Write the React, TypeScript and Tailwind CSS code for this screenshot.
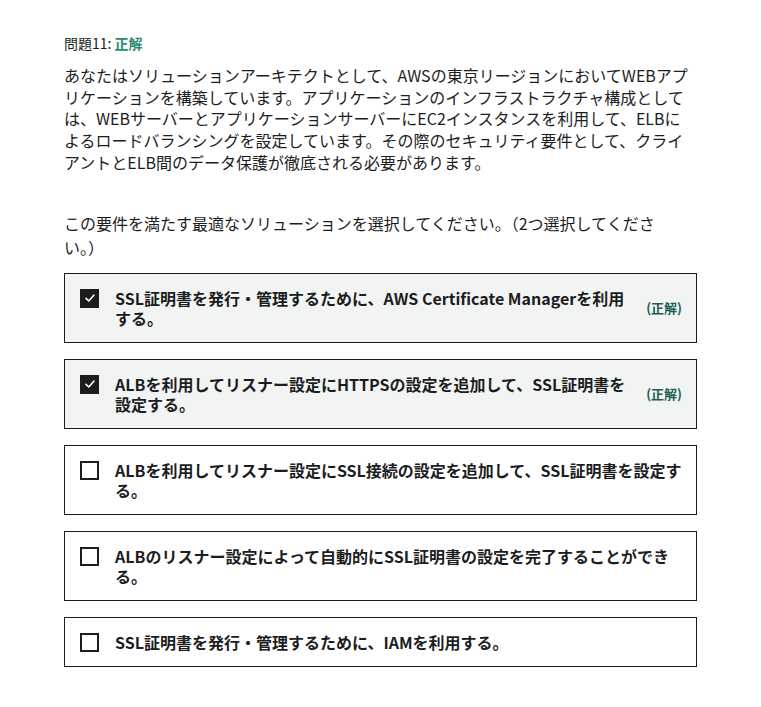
const font = { fontFamily: '"Noto Sans CJK JP", "Noto Sans", sans-serif' };

type Choice = { text: string; checked: boolean; correct: boolean };

const choices: Choice[] = [
  { text: 'SSL証明書を発行・管理するために、AWS Certificate Managerを利用する。', checked: true, correct: true },
  { text: 'ALBを利用してリスナー設定にHTTPSの設定を追加して、SSL証明書を設定する。', checked: true, correct: true },
  { text: 'ALBを利用してリスナー設定にSSL接続の設定を追加して、SSL証明書を設定する。', checked: false, correct: false },
  { text: 'ALBのリスナー設定によって自動的にSSL証明書の設定を完了することができる。', checked: false, correct: false },
  { text: 'SSL証明書を発行・管理するために、IAMを利用する。', checked: false, correct: false },
];

function Checkbox({ checked }: { checked: boolean }) {
  if (checked) {
    return (
      <div className="w-[19px] h-[19px] shrink-0 bg-[#1c1d1f] flex items-center justify-center">
        <svg width="12" height="12" viewBox="0 0 12 12" fill="none">
          <path d="M2 6.3 L4.8 9 L10 3" stroke="white" strokeWidth="1.6" strokeLinecap="round" strokeLinejoin="round" />
        </svg>
      </div>
    );
  }
  return <div className="w-[19px] h-[19px] shrink-0 border-2 border-[#1c1d1f] bg-white" />;
}

export default function App() {
  return (
    <div className="w-[761px] h-[707px] bg-white text-[#1c1d1f]" style={font}>
      <div className="pl-[64px] pt-[33px] w-[697px]">
        {/* Header */}
        <div className="text-[14px] leading-[20px] mb-[12px]">
          問題11: <span className="font-bold text-[#2d8a73]">正解</span>
        </div>

        <p className="text-[16px] leading-[21.7px]">
          あなたはソリューションアーキテクトとして、AWSの東京リージョンにおいてWEBアプ<br />
          リケーションを構築しています。アプリケーションのインフラストラクチャ構成として<br />
          は、WEBサーバーとアプリケーションサーバーにEC2インスタンスを利用して、ELBに<br />
          よるロードバランシングを設定しています。その際のセキュリティ要件として、クライ<br />
          アントとELB間のデータ保護が徹底される必要があります。
        </p>

        <p className="text-[16px] leading-[24px] mt-[37px] pr-[20px]">
          この要件を満たす最適なソリューションを選択してください。（2つ選択してください。）
        </p>

        {/* Choices */}
        <div className="mt-[14px] flex flex-col gap-[16px]">
          {choices.map((c) => (
            <div
              key={c.text}
              className={`border border-[#1c1d1f] flex items-center pl-[15px] pr-[14px] py-[14px] ${
                c.correct ? 'bg-[#f1f4f3]' : 'bg-white'
              }`}
            >
              <div className="self-start pt-[1px]">
                <Checkbox checked={c.checked} />
              </div>
              <div className="flex-1 ml-[16px] text-[16px] leading-[20px] font-bold">{c.text}</div>
              {c.correct && (
                <div className="ml-[10px] text-[13px] font-bold text-[#1e5c54] shrink-0">(正解)</div>
              )}
            </div>
          ))}
        </div>
      </div>
    </div>
  );
}
